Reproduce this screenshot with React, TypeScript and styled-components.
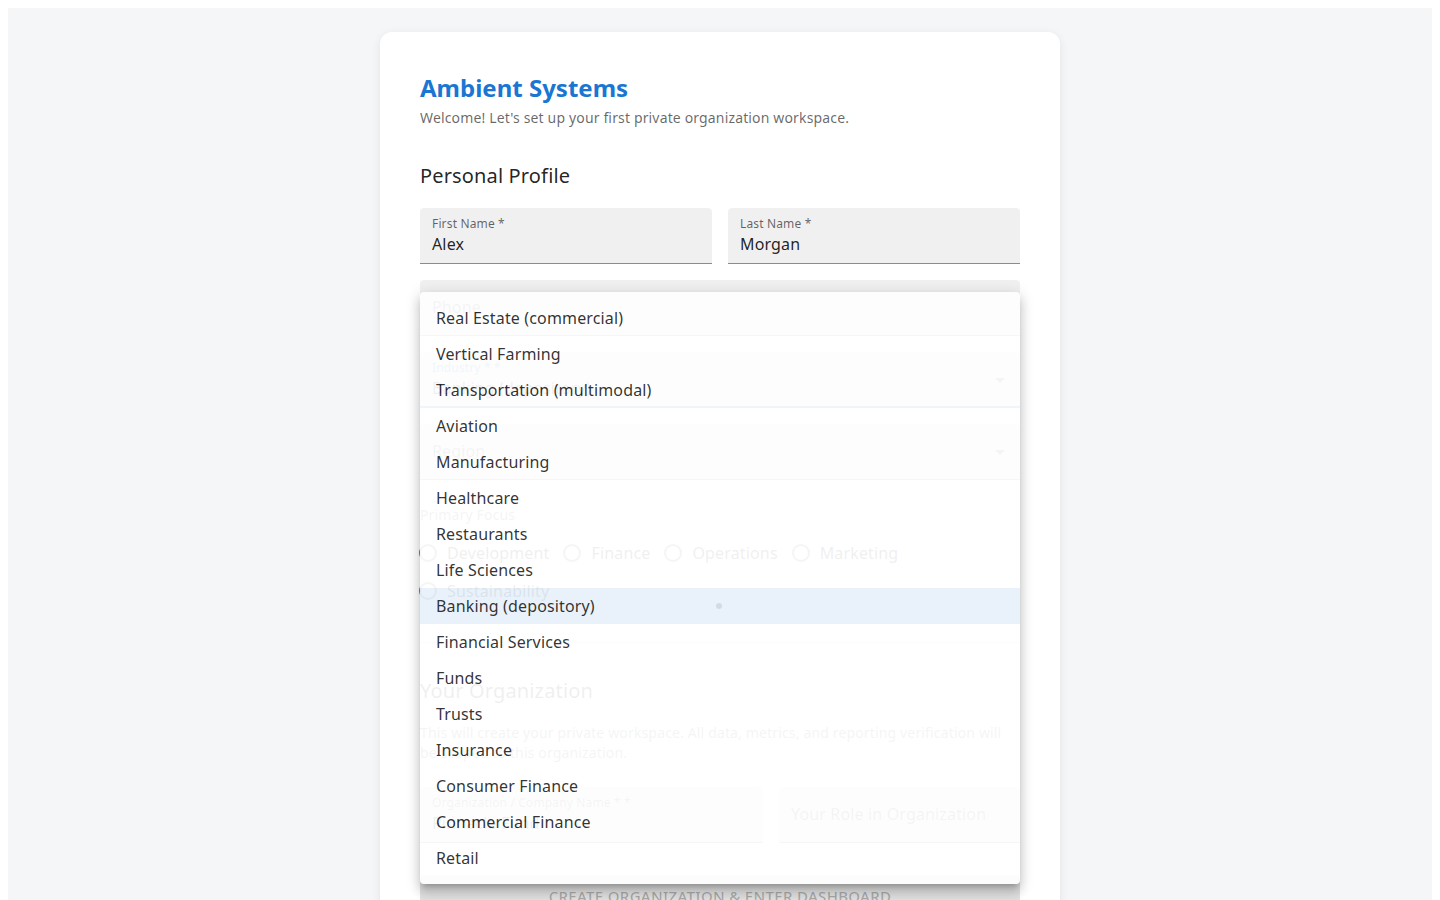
import React from 'react';
import styled, { createGlobalStyle } from 'styled-components';

const industries = [
  'Real Estate (commercial)',
  'Vertical Farming',
  'Transportation (multimodal)',
  'Aviation',
  'Manufacturing',
  'Healthcare',
  'Restaurants',
  'Life Sciences',
  'Banking (depository)',
  'Financial Services',
  'Funds',
  'Trusts',
  'Insurance',
  'Consumer Finance',
  'Commercial Finance',
  'Retail',
];

const focusOptions = ['Development', 'Finance', 'Operations', 'Marketing', 'Sustainability'];

const GlobalStyle = createGlobalStyle`
  body {
    margin: 8px;
    overflow: hidden;
    font-family: "Noto Sans", "Open Sans", sans-serif;
    letter-spacing: 0.15px;
    color: rgba(0, 0, 0, 0.87);
  }
`;

const Page = styled.div`
  background: #f5f6f8;
  min-height: 100vh;
  padding: 24px 0;
`;

const Card = styled.div`
  position: relative;
  width: 680px;
  margin: 0 auto;
  box-sizing: border-box;
  padding: 40px;
  background: #fff;
  border-radius: 12px;
  box-shadow: 0 2px 10px rgba(0, 0, 0, 0.08);
`;

const Title = styled.h1`
  margin: 0;
  font-size: 24px;
  line-height: 32px;
  font-weight: 700;
  letter-spacing: 0;
  color: #1976d2;
`;

const Subtitle = styled.p`
  margin: 4px 0 0;
  font-size: 14px;
  line-height: 20px;
  color: rgba(0, 0, 0, 0.6);
`;

const SectionTitle = styled.h2<{ $top: number }>`
  margin: ${p => p.$top}px 0 0;
  font-size: 20px;
  line-height: 32px;
  font-weight: 400;
`;

const FieldRow = styled.div<{ $cols: string; $top: number }>`
  display: grid;
  grid-template-columns: ${p => p.$cols};
  gap: 16px;
  margin-top: ${p => p.$top}px;
`;

const FieldBox = styled.div<{ $focused?: boolean; $empty?: boolean }>`
  position: relative;
  height: 56px;
  box-sizing: border-box;
  padding: ${p => (p.$empty ? '0 12px' : '9px 12px 0')};
  display: flex;
  flex-direction: column;
  justify-content: ${p => (p.$empty ? 'center' : 'flex-start')};
  background: rgba(0, 0, 0, 0.06);
  border-radius: 4px 4px 0 0;
  border-bottom: ${p => (p.$focused ? '2px solid #1976d2' : '1px solid rgba(0, 0, 0, 0.42)')};
`;

const FieldLabel = styled.span<{ $focused?: boolean; $big?: boolean }>`
  font-size: ${p => (p.$big ? 16 : 12)}px;
  line-height: ${p => (p.$big ? 23 : 14)}px;
  color: ${p => (p.$focused ? '#1976d2' : 'rgba(0, 0, 0, 0.6)')};
`;

const FieldValue = styled.span`
  margin-top: 2px;
  font-size: 16px;
  line-height: 23px;
  color: rgba(0, 0, 0, 0.87);
`;

const Arrow = styled.svg`
  position: absolute;
  right: 8px;
  top: 16px;
  width: 24px;
  height: 24px;
  fill: rgba(0, 0, 0, 0.54);
`;

const Stack = styled.div`
  display: flex;
  flex-direction: column;
  gap: 16px;
  margin-top: 16px;
`;

const GroupLabel = styled.div`
  margin-top: 24px;
  font-size: 14px;
  line-height: 22px;
  color: rgba(0, 0, 0, 0.6);
`;

const RadioGroup = styled.div`
  display: flex;
  flex-wrap: wrap;
  margin-top: 8px;
`;

const RadioOption = styled.label`
  display: flex;
  align-items: center;
  gap: 10px;
  height: 38px;
  margin-right: 15px;
  font-size: 16px;
  color: rgba(0, 0, 0, 0.87);
`;

const RadioCircle = styled.span`
  width: 18px;
  height: 18px;
  box-sizing: border-box;
  margin-left: -1px;
  border-radius: 50%;
  border: 2px solid rgba(0, 0, 0, 0.54);
`;

const Divider = styled.hr`
  margin: 32px 0 0;
  border: none;
  border-top: 1px solid rgba(0, 0, 0, 0.12);
`;

const Description = styled.p`
  margin: 16px 0 0;
  font-size: 14px;
  line-height: 20px;
  color: rgba(0, 0, 0, 0.6);
`;

const SubmitButton = styled.button`
  display: block;
  width: 100%;
  height: 42px;
  margin-top: 32px;
  border: none;
  border-radius: 4px;
  background: rgba(0, 0, 0, 0.12);
  color: rgba(0, 0, 0, 0.26);
  font-family: inherit;
  font-size: 15px;
  font-weight: 500;
  letter-spacing: 0.32px;
  text-transform: uppercase;
`;

const Menu = styled.ul`
  position: absolute;
  left: 40px;
  right: 40px;
  top: 260px;
  margin: 0;
  padding: 8px 0;
  list-style: none;
  background: #fff;
  border-radius: 4px;
  opacity: 0.93;
  box-shadow: 0 5px 5px -3px rgba(0, 0, 0, 0.2), 0 8px 10px 1px rgba(0, 0, 0, 0.14),
    0 3px 14px 2px rgba(0, 0, 0, 0.12);
`;

const MenuItem = styled.li<{ $selected?: boolean }>`
  position: relative;
  display: flex;
  align-items: center;
  height: 36px;
  padding: 0 16px;
  font-size: 16px;
  color: rgba(0, 0, 0, 0.87);
  background: ${p => (p.$selected ? 'rgba(25, 118, 210, 0.1)' : 'transparent')};
`;

const RippleDot = styled.span`
  position: absolute;
  left: 296px;
  top: 15px;
  width: 6px;
  height: 6px;
  border-radius: 50%;
  background: rgba(0, 0, 0, 0.1);
`;

interface FieldProps {
  label: string;
  value?: string;
  focused?: boolean;
  select?: boolean;
}

const Field: React.FC<FieldProps> = ({ label, value, focused, select }) => (
  <FieldBox $focused={focused} $empty={!value}>
    <FieldLabel $focused={focused} $big={!value}>{label}</FieldLabel>
    {value && <FieldValue>{value}</FieldValue>}
    {select && (
      <Arrow viewBox="0 0 24 24">
        <path d="M7 10l5 5 5-5z" />
      </Arrow>
    )}
  </FieldBox>
);

const App: React.FC = () => {
  return (
    <Page>
      <GlobalStyle />
      <Card>
        <Title>Ambient Systems</Title>
        <Subtitle>Welcome! Let's set up your first private organization workspace.</Subtitle>

        <SectionTitle $top={32}>Personal Profile</SectionTitle>
        <FieldRow $cols="1fr 1fr" $top={16}>
          <Field label="First Name *" value="Alex" />
          <Field label="Last Name *" value="Morgan" />
        </FieldRow>
        <Stack>
          <Field label="Phone" />
          <Field label="Industry * *" value="Banking (depository)" focused select />
          <Field label="Region" select />
        </Stack>

        <GroupLabel>Primary Focus</GroupLabel>
        <RadioGroup>
          {focusOptions.map(option => (
            <RadioOption key={option}>
              <RadioCircle />
              {option}
            </RadioOption>
          ))}
        </RadioGroup>

        <Divider />

        <SectionTitle $top={32}>Your Organization</SectionTitle>
        <Description>
          This will create your private workspace. All data, metrics, and reporting verification will
          be scoped to this organization.
        </Description>
        <FieldRow $cols="343fr 241fr" $top={24}>
          <Field label="Organization / Company Name * *" value="Pinnacle Fund" />
          <Field label="Your Role in Organization" />
        </FieldRow>

        <SubmitButton disabled>Create Organization &amp; Enter Dashboard</SubmitButton>

        <Menu>
          {industries.map(name => (
            <MenuItem key={name} $selected={name === 'Banking (depository)'}>
              {name}
              {name === 'Banking (depository)' && <RippleDot />}
            </MenuItem>
          ))}
        </Menu>
      </Card>
    </Page>
  );
};

export default App;
